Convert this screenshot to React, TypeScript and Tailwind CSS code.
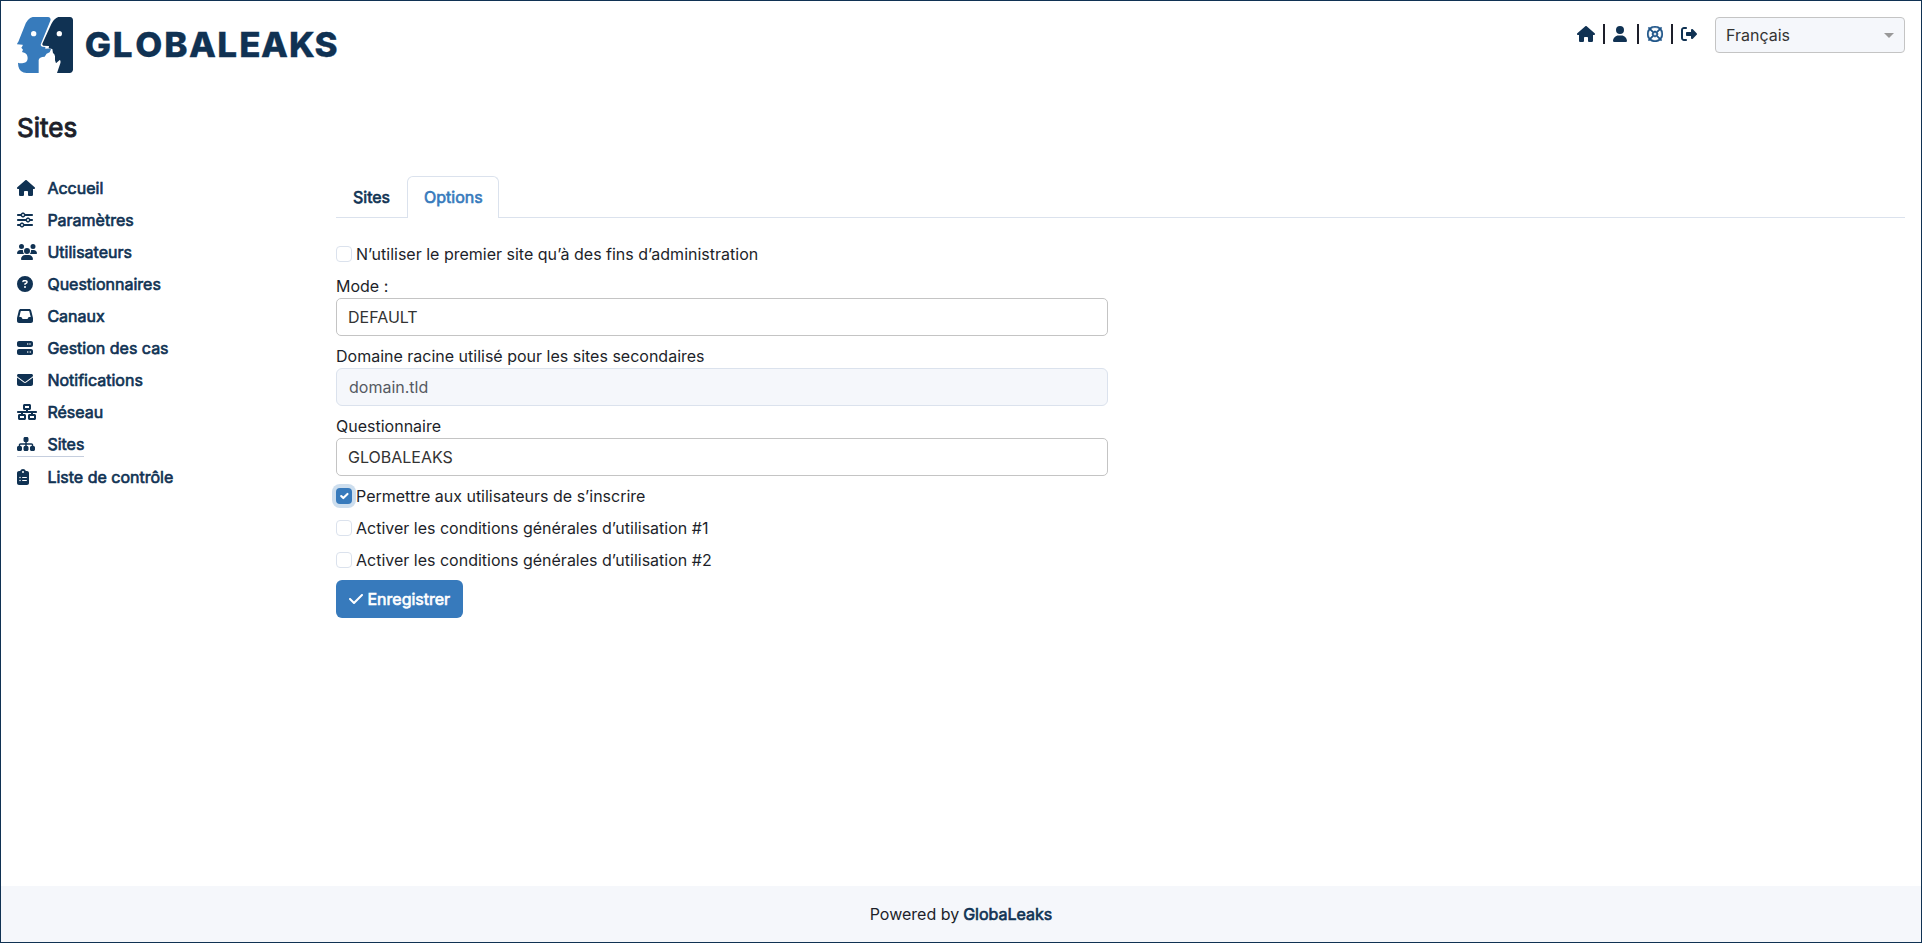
import type { ReactNode } from "react";
import {
  FaHouse,
  FaSliders,
  FaUsers,
  FaCircleQuestion,
  FaInbox,
  FaServer,
  FaEnvelope,
  FaNetworkWired,
  FaSitemap,
  FaClipboardList,
  FaUser,
  FaRegLifeRing,
  FaRightFromBracket,
  FaCheck,
} from "react-icons/fa6";

const heavy = "[-webkit-text-stroke:0.65px_currentColor]";

const menu = [
  { label: "Accueil", icon: <FaHouse className="h-4 w-[18px]" /> },
  { label: "Paramètres", icon: <FaSliders className="h-4 w-4" /> },
  { label: "Utilisateurs", icon: <FaUsers className="h-4 w-5" /> },
  { label: "Questionnaires", icon: <FaCircleQuestion className="h-4 w-4" /> },
  { label: "Canaux", icon: <FaInbox className="h-4 w-4" /> },
  { label: "Gestion des cas", icon: <FaServer className="h-4 w-4" /> },
  { label: "Notifications", icon: <FaEnvelope className="h-4 w-4" /> },
  { label: "Réseau", icon: <FaNetworkWired className="h-4 w-5" /> },
  { label: "Sites", icon: <FaSitemap className="h-4 w-[18px]" />, active: true },
  { label: "Liste de contrôle", icon: <FaClipboardList className="h-4 w-3" /> },
];

function Logo() {
  return (
    <svg width="330" height="57" viewBox="0 0 330 57" aria-label="GlobaLeaks">
      <g transform="translate(-7 -7) scale(0.33333)">
        <path
          fill="#377bbc"
          d="M68 21H115Q124 23 121 32L93 101Q90 108 97 110L106 111V116Q119 114 123 118L119 127Q108 130 104 140Q87 141 86 150V189H50Q29 189 25 169L24 158Q31 161 40 159Q53 157 53 144Q52 131 43 128L36 126L39 119L34 113L38 107V104L21 103Q21 100 25 95L43 50Q52 24 68 21Z"
        />
        <path
          fill="#103253"
          d="M145 21H180Q189 22 189 31V179Q188 188 179 189H141L151 160Q153 151 149 150L138 160L135 151V139Q134 132 129 129L127 117L116 115L117 108L100 107Q95 105 98 99L124 42Q132 25 145 21Z"
        />
        <circle cx="71" cy="71" r="8" fill="#fff" />
        <circle cx="148" cy="71" r="8" fill="#fff" />
      </g>
      <text
        x="65.8 92.9 114.7 142.9 166.9 194.4 215.8 236.8 264.2 288.8"
        y="40.2"
        transform="scale(1.03 1)"
        fill="#103253"
        stroke="#103253"
        strokeWidth="0.3"
        fontFamily="Inter, sans-serif"
        fontWeight="800"
        fontSize="34"
      >
        GLOBALEAKS
      </text>
    </svg>
  );
}

function Check({ checked, children }: { checked?: boolean; children: ReactNode }) {
  return (
    <label className="mb-2 flex h-6 items-center gap-1">
      {checked ? (
        <span className="flex size-4 items-center justify-center rounded-[4px] bg-[#377abc] ring-4 ring-[#377abc]/25">
          <svg viewBox="0 0 20 20" className="size-[14px]">
            <path d="m6 10 3 3 6-6" fill="none" stroke="#fff" strokeWidth="3" strokeLinecap="round" strokeLinejoin="round" />
          </svg>
        </span>
      ) : (
        <span className="size-4 rounded-[4px] border border-[#dbe2ed] bg-white" />
      )}
      <span>{children}</span>
    </label>
  );
}

function Select({ children }: { children: ReactNode }) {
  return (
    <div className="mb-2 flex h-[38px] items-center rounded-[5px] border border-[#c4c4c4] bg-white px-[11px] text-[#333]">
      {children}
    </div>
  );
}

export default function App() {
  return (
    <div className="flex h-[943px] flex-col border border-[#103253] bg-white font-['Inter',sans-serif] text-base leading-6 text-[#1d1f2a]">
      <header className="flex items-start justify-between px-4 pt-4">
        <Logo />
        <div className="flex items-start">
          <div className="flex h-[34px] items-center text-[#103253]">
            <FaHouse className="h-4 w-[18px]" />
            <i className="mx-2 h-5 w-[2px] bg-[#1d1f2a]" />
            <FaUser className="mr-[2px] h-4 w-[14px]" />
            <i className="mx-2 h-5 w-[2px] bg-[#1d1f2a]" />
            <FaRegLifeRing className="h-4 w-4 text-[#1f5588]" strokeWidth={16} />
            <i className="mx-2 h-5 w-[2px] bg-[#1d1f2a]" />
            <FaRightFromBracket className="h-4 w-4" />
          </div>
          <div className="ml-[18px] flex h-9 w-[190px] items-center justify-between rounded-[4px] border border-[#c4c4c4] bg-[#f5f7fb] pr-[10px] pl-[10px] text-[#333]">
            <span>Français</span>
            <i className="border-x-[5px] border-t-[5px] border-x-transparent border-t-[#999]" />
          </div>
        </div>
      </header>

      <h1 className="mt-[38px] px-4 text-[26px] leading-8 [-webkit-text-stroke:0.95px_currentColor]">Sites</h1>

      <div className="mt-8 flex flex-1 px-4">
        <nav className="flex w-[319px] flex-col items-start text-[#103253]">
          {menu.map((m) => (
            <a
              key={m.label}
              className={`mb-2 flex items-center ${heavy} ${m.active ? "border-b border-[#c5cede]" : ""}`}
            >
              <span className="flex w-[30px] [-webkit-text-stroke:0]">{m.icon}</span>
              <span className="pl-[0.4px] leading-6">{m.label}</span>
            </a>
          ))}
        </nav>

        <main className="flex-1">
          <div className={`flex h-[42px] border-b border-[#dbe2ed] ${heavy}`}>
            <a className="border border-transparent px-4 py-2 text-[#103253]">Sites</a>
            <a className="h-[42px] rounded-t-[6px] border border-b-0 border-[#dbe2ed] bg-white py-2 pr-[15px] pl-4 text-[#377abc]">
              Options
            </a>
          </div>
          <div className="w-[772px] pt-6">
            <Check>N’utiliser le premier site qu’à des fins d’administration</Check>
            <div>Mode :</div>
            <Select>DEFAULT</Select>
            <div>Domaine racine utilisé pour les sites secondaires</div>
            <div className="mb-2 flex h-[38px] items-center rounded-[6px] border border-[#dbe2ed] bg-[#f5f7fb] px-3 text-[#555a62]">
              domain.tld
            </div>
            <div>Questionnaire</div>
            <Select>GLOBALEAKS</Select>
            <Check checked>Permettre aux utilisateurs de s’inscrire</Check>
            <Check>Activer les conditions générales d’utilisation #1</Check>
            <Check>Activer les conditions générales d’utilisation #2</Check>
            <button className={`flex h-[38px] items-center rounded-[6px] bg-[#377abc] px-[13px] text-white ${heavy}`}>
              <FaCheck className="mr-[4.5px] h-4 w-[14px]" />
              Enregistrer
            </button>
          </div>
        </main>
      </div>

      <footer className="flex h-14 items-center justify-center gap-1 bg-[#f5f7fb]">
        <span>Powered by</span>
        <span className={`text-[#103253] ${heavy}`}>GlobaLeaks</span>
      </footer>
    </div>
  );
}
